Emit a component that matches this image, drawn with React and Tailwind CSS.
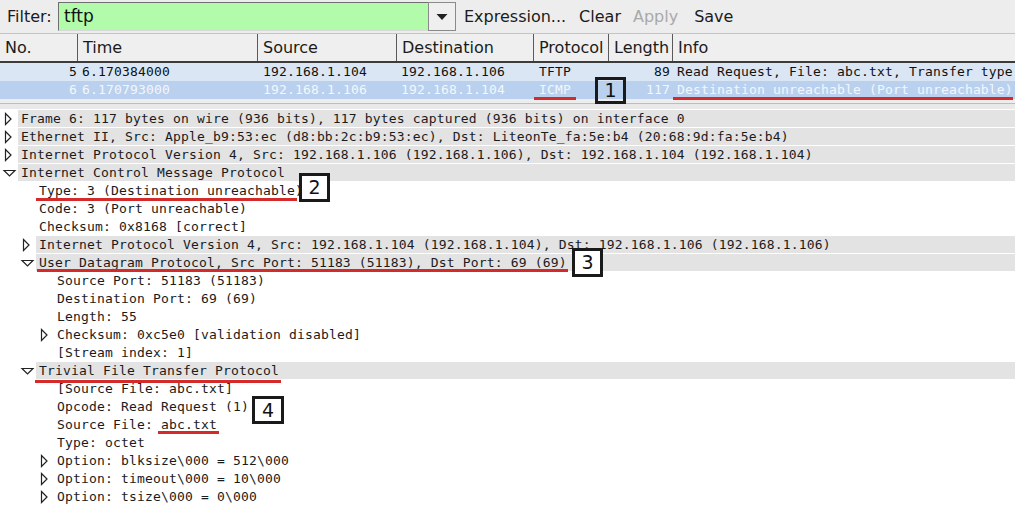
import React from "react";

const MONO = { fontFamily: '"DejaVu Sans Mono", "Liberation Mono", monospace' };

const columns = [
  { label: "No.", w: "w-[78px]" },
  { label: "Time", w: "w-[180px]" },
  { label: "Source", w: "w-[139px]" },
  { label: "Destination", w: "w-[137px]" },
  { label: "Protocol", w: "w-[75px]" },
  { label: "Length", w: "w-[64px]" },
  { label: "Info", w: "flex-1" },
];

const packets = [
  {
    no: "5",
    time: "6.170384000",
    src: "192.168.1.104",
    dst: "192.168.1.106",
    proto: "TFTP",
    len: "89",
    info: "Read Request, File: abc.txt, Transfer type",
    selected: false,
  },
  {
    no: "6",
    time: "6.170793000",
    src: "192.168.1.106",
    dst: "192.168.1.104",
    proto: "ICMP",
    len: "117",
    info: "Destination unreachable (Port unreachable)",
    selected: true,
  },
];

// state: "leaf" | "closed" | "open"
const tree = [
  { lvl: 0, st: "closed", band: true, text: "Frame 6: 117 bytes on wire (936 bits), 117 bytes captured (936 bits) on interface 0" },
  { lvl: 0, st: "closed", band: true, text: "Ethernet II, Src: Apple_b9:53:ec (d8:bb:2c:b9:53:ec), Dst: LiteonTe_fa:5e:b4 (20:68:9d:fa:5e:b4)" },
  { lvl: 0, st: "closed", band: true, text: "Internet Protocol Version 4, Src: 192.168.1.106 (192.168.1.106), Dst: 192.168.1.104 (192.168.1.104)" },
  { lvl: 0, st: "open", band: true, text: "Internet Control Message Protocol" },
  { lvl: 1, st: "leaf", text: "Type: 3 (Destination unreachable)" },
  { lvl: 1, st: "leaf", text: "Code: 3 (Port unreachable)" },
  { lvl: 1, st: "leaf", text: "Checksum: 0x8168 [correct]" },
  { lvl: 1, st: "closed", band: true, text: "Internet Protocol Version 4, Src: 192.168.1.104 (192.168.1.104), Dst: 192.168.1.106 (192.168.1.106)" },
  { lvl: 1, st: "open", band: true, text: "User Datagram Protocol, Src Port: 51183 (51183), Dst Port: 69 (69)" },
  { lvl: 2, st: "leaf", text: "Source Port: 51183 (51183)" },
  { lvl: 2, st: "leaf", text: "Destination Port: 69 (69)" },
  { lvl: 2, st: "leaf", text: "Length: 55" },
  { lvl: 2, st: "closed", text: "Checksum: 0xc5e0 [validation disabled]" },
  { lvl: 2, st: "leaf", text: "[Stream index: 1]" },
  { lvl: 1, st: "open", band: true, text: "Trivial File Transfer Protocol" },
  { lvl: 2, st: "leaf", text: "[Source File: abc.txt]" },
  { lvl: 2, st: "leaf", text: "Opcode: Read Request (1)" },
  { lvl: 2, st: "leaf", text: "Source File: abc.txt" },
  { lvl: 2, st: "leaf", text: "Type: octet" },
  { lvl: 2, st: "closed", text: "Option: blksize\\000 = 512\\000" },
  { lvl: 2, st: "closed", text: "Option: timeout\\000 = 10\\000" },
  { lvl: 2, st: "closed", text: "Option: tsize\\000 = 0\\000" },
];

const indent = ["w-0", "w-[18px]", "w-[36px]"];

function Arrow({ st }) {
  if (st === "closed") {
    return (
      <svg width="18" height="18" viewBox="0 0 18 18">
        <polygon points="5.5,3.5 11,9 5.5,14.5" fill="white" stroke="#222" strokeWidth="1.2" />
      </svg>
    );
  }
  if (st === "open") {
    return (
      <svg width="18" height="18" viewBox="0 0 18 18">
        <polygon points="4,6.5 15,6.5 9.5,12" fill="white" stroke="#222" strokeWidth="1.2" />
      </svg>
    );
  }
  return null;
}

function Mark({ className }) {
  return <div className={`absolute h-[3px] bg-[#d42a2a] ${className}`} />;
}

function NumBox({ n, className }) {
  return (
    <div
      className={`absolute flex items-center justify-center border-[3px] border-[#1a1a1a] text-[19px] text-[#111] ${className}`}
      style={{ fontFamily: '"DejaVu Sans", sans-serif' }}
    >
      {n}
    </div>
  );
}

export default function App() {
  return (
    <div
      className="relative h-[509px] w-[1015px] overflow-hidden bg-[#ededed] text-[#1b1b1b]"
      style={{ fontFamily: '"DejaVu Sans", "Liberation Sans", sans-serif' }}
    >
      {/* filter bar */}
      <div className="flex h-[34px] items-center border-b border-[#c4c4c4] text-[16px]">
        <span className="ml-[7px] w-[51px]">Filter:</span>
        <div className="flex h-[29px] w-[370px] items-center border-l border-t border-[#6f6f6f] border-b border-b-[#d8d8d8] bg-[#b1fbaa] pl-[5px] text-[17px] text-[#111]">
          tftp
        </div>
        <div className="flex h-[29px] w-[28px] items-center justify-center border border-[#8a8a8a] bg-[#efefef]">
          <svg width="12" height="8" viewBox="0 0 12 8">
            <polygon points="0.5,1 11.5,1 6,7" fill="#222" />
          </svg>
        </div>
        <span className="ml-[8px]">Expression...</span>
        <span className="ml-[13px]">Clear</span>
        <span className="ml-[12px] text-[#a9a9a9]">Apply</span>
        <span className="ml-[16px]">Save</span>
      </div>

      {/* packet list header */}
      <div className="flex h-[29px] border-b-2 border-[#3c3c3c] bg-[#efefef] text-[16px]">
        {columns.map((c, i) => (
          <div
            key={c.label}
            className={`${c.w} flex items-center pl-[5px] pt-[1px] ${i < columns.length - 1 ? "border-r border-[#5a5a5a]" : ""}`}
          >
            {c.label}
          </div>
        ))}
      </div>

      {/* packet rows */}
      <div className="text-[13px] tracking-[0.17px]" style={MONO}>
        {packets.map((p) => (
          <div
            key={p.no}
            className={`flex h-[18px] items-center whitespace-nowrap ${p.selected ? "bg-[#b9d1ee] text-[#f3f7fc]" : "bg-[#dbe6f4] text-[#111]"}`}
          >
            <div className="w-[78px] pr-[1px] text-right">{p.no}</div>
            <div className="w-[180px] pl-[4px]">{p.time}</div>
            <div className="w-[139px] pl-[5px]">{p.src}</div>
            <div className="w-[137px] pl-[4px]">{p.dst}</div>
            <div className="w-[75px] pl-[5px]">{p.proto}</div>
            <div className="w-[64px] pr-[3px] text-right">{p.len}</div>
            <div className="flex-1 overflow-hidden pl-[4px]">{p.info}</div>
          </div>
        ))}
      </div>

      {/* splitter */}
      <div className="mt-[4px] h-[6px] border-t border-[#bdbdbd] bg-[#e9e9e9]" />

      {/* detail tree */}
      <div className="h-[401px] bg-white pt-[1px] text-[13px] tracking-[0.17px]" style={MONO}>
        {tree.map((r, i) => (
          <div key={i} className="flex h-[18px] whitespace-nowrap">
            <div className={`${indent[r.lvl]} shrink-0`} />
            <div className="flex w-[18px] shrink-0 items-center">
              <Arrow st={r.st} />
            </div>
            <div
              className={`mb-[1px] flex flex-1 items-center overflow-hidden pl-[3px] ${r.band ? "bg-[#e3e3e3]" : ""}`}
            >
              {r.text}
            </div>
          </div>
        ))}
      </div>
      <div className="h-[4px] bg-[#e6edf5]" />

      {/* annotations */}
      <Mark className="left-[534px] top-[97px] w-[42px]" />
      <Mark className="left-[673px] top-[97px] w-[340px]" />
      <Mark className="left-[36px] top-[198px] w-[261px]" />
      <Mark className="left-[37px] top-[269px] w-[531px]" />
      <Mark className="left-[35px] top-[380px] w-[246px]" />
      <Mark className="left-[158px] top-[431px] w-[61px]" />

      <NumBox n="1" className="left-[595px] top-[77px] h-[27px] w-[31px]" />
      <NumBox n="2" className="left-[299px] top-[173px] h-[29px] w-[31px] bg-white" />
      <NumBox n="3" className="left-[572px] top-[248px] h-[29px] w-[31px] bg-white" />
      <NumBox n="4" className="left-[252px] top-[396px] h-[28px] w-[32px] bg-white" />
    </div>
  );
}
